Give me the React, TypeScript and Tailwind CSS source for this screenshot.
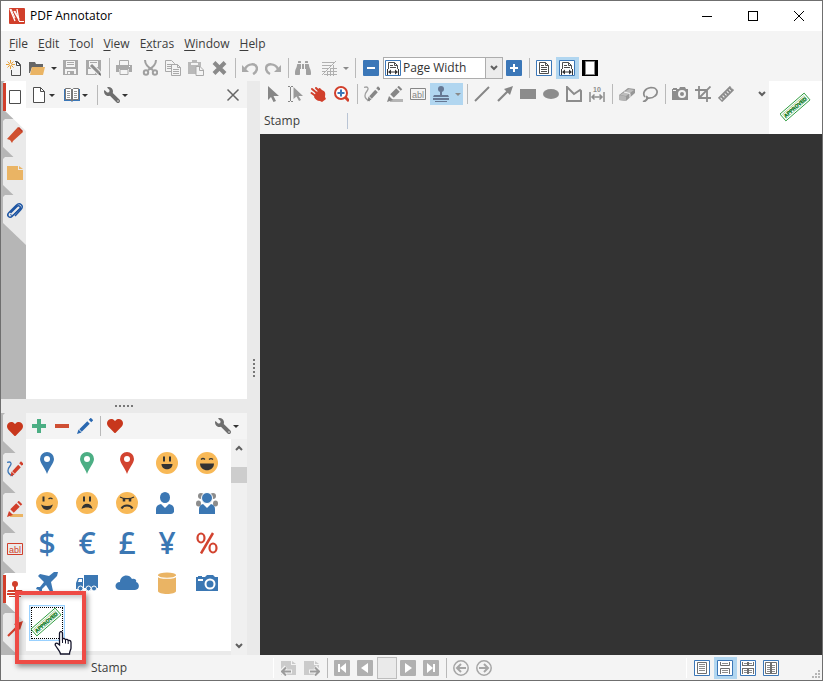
import React from 'react';
import clsx from 'clsx';
import { FaBinoculars, FaWrench, FaHeart } from 'react-icons/fa';

type SvgProps = { children: React.ReactNode; className?: string; box?: number };

const Svg: React.FC<SvgProps> = ({ children, className = 'size-4', box = 16 }) => (
  <svg
    viewBox={`0 0 ${box} ${box}`}
    className={clsx('shrink-0', className)}
    fill="none"
    stroke="none"
    aria-hidden="true"
  >
    {children}
  </svg>
);

/* ---------- main toolbar ---------- */

const NewIcon = () => (
  <Svg>
    <path d="M5.500 10v5.500h9v-11l-3-3H9" stroke="#4d4d4d" />
    <path d="M10.500 1.500v4h4z" fill="#fff" stroke="#4d4d4d" />
    <path d="M4.500 0v9M0 4.500h9M1.500 1.500l6 6M7.500 1.500l-6 6" stroke="#e8a33d" />
    <circle cx="4.500" cy="4.500" r="1.500" fill="#fff" stroke="#e8a33d" />
  </Svg>
);

const OpenIcon = () => (
  <Svg>
    <path d="M0 2h6l1 2h7v3H3l-2 6H0z" fill="#666" />
    <path d="M3 7h13l-2 8H1z" fill="#eab464" />
  </Svg>
);

const SaveIcon = () => (
  <Svg>
    <path d="M1 0h15v15H1z" fill="#a9a9a9" />
    <path d="M4 1h9v6H4zM3 9h11v5H3z" fill="#f4f4f4" />
    <path d="M5 2h7v1H5zM5 4h7v1H5zM5 11h7v3H5z" fill="#a9a9a9" />
    <path d="M6 12h2v2H6z" fill="#f4f4f4" />
  </Svg>
);

const SaveAsIcon = () => (
  <Svg>
    <path d="M1 0h15v15H1z" fill="#a9a9a9" />
    <path d="M4 1h9v6H4zM3 9h7v5H3z" fill="#f4f4f4" />
    <path d="M5 2h7v1H5z" fill="#a9a9a9" />
    <path d="M6 5l9 9" stroke="#f4f4f4" strokeWidth="5" />
    <path d="M6 5l8 8" stroke="#8f8f8f" strokeWidth="3" />
    <path d="M13 14l3 2-1-4z" fill="#666" />
  </Svg>
);

const PrintIcon = () => (
  <Svg>
    <path d="M3.500.500h9v5h-9z" fill="#f4f4f4" stroke="#a9a9a9" />
    <path d="M0 5h16v7h-3V9H3v3H0z" fill="#a9a9a9" />
    <path d="M4 9.500h8v5H4z" fill="#f4f4f4" stroke="#a9a9a9" />
    <path d="M13 6h1v1h-1z" fill="#fff" />
  </Svg>
);

const CutIcon = () => (
  <Svg>
    <path d="M3 0c0 4 2 7 8 10M14 0c0 4-2 7-8 10" stroke="#a0a0a0" strokeWidth="2" />
    <circle cx="4" cy="12.500" r="2.200" stroke="#a0a0a0" strokeWidth="2" />
    <circle cx="13" cy="12.500" r="2.200" stroke="#a0a0a0" strokeWidth="2" />
  </Svg>
);

const CopyIcon = () => (
  <Svg>
    <path d="M.5.5h6l3 3v8h-9z" stroke="#a9a9a9" />
    <path d="M2 4.500h5M2 6.500h4M2 8.500h4" stroke="#a9a9a9" />
    <path d="M6.500 4.500h6l3 3v8h-9z" fill="#f4f4f4" stroke="#a9a9a9" />
    <path d="M12.500 4.500v3h3M8 9.500h6M8 11.500h6M8 13.500h6" stroke="#a9a9a9" />
  </Svg>
);

const PasteIcon = () => (
  <Svg>
    <path d="M0 2h4V0h5v2h4v12H0z" fill="#b9b9b9" />
    <path d="M3 3h7v2H3z" fill="#f4f4f4" />
    <path d="M8 6.500h4l3.500 3.500v5.500H8z" fill="#f4f4f4" stroke="#a9a9a9" />
    <path d="M11.500 7v3.500H15" stroke="#a9a9a9" />
  </Svg>
);

const DeleteIcon = () => (
  <Svg>
    <path d="M3 2.500l11 11M14 2.500l-11 11" stroke="#8a8a8a" strokeWidth="4" />
  </Svg>
);

const UndoIcon = ({ flip = false }: { flip?: boolean }) => (
  <Svg className={clsx('size-4', flip && '-scale-x-100')}>
    <path d="M3 9c3-6 11-6 12-1 0 3-2 5-4 6" stroke="#a9a9a9" strokeWidth="2.500" />
    <path d="M0 5v7h7z" fill="#a9a9a9" />
  </Svg>
);

const NoGridIcon = () => (
  <Svg>
    <path
      d="M1 2.500h12M1 5.500h9M1 8.500h6M1 11.500h3M6 11.500h10M9 8.500h7M3 14.500h13M6.500 11v5M9.500 8v8M12.500 5v11"
      stroke="#b0b0b0"
    />
    <path d="M1 15L15 1" stroke="#b0b0b0" />
  </Svg>
);

const ZoomStep = ({ plus = false }: { plus?: boolean }) => (
  <Svg>
    <rect width="16" height="16" rx="1" fill="#3b77b8" />
    <path d={plus ? 'M4 8h8M8 4v8' : 'M4 8h8'} stroke="#fff" strokeWidth="2" />
  </Svg>
);

const PageFitIcon = ({ arrows = false }: { arrows?: boolean }) => (
  <Svg>
    <path d="M.5.500h15v15H.5z" fill="#fff" stroke="#3b77b8" />
    <path d="M3.500 2.500h6l3 3v8h-9z" stroke="#4d4d4d" />
    <path d="M9.500 2.500v3h3M5 5.500h3M5 7.500h6" stroke="#4d4d4d" />
    {arrows ? (
      <>
        <path d="M2 9h12v6H2z" fill="#fff" />
        <path d="M2.500 9v6M13.500 9v6M4 12h8" stroke="#333" />
        <path d="M3 12l3-2.500v5zM13 12l-3-2.500v5z" fill="#333" />
      </>
    ) : (
      <path d="M5 9.500h6M5 11.500h6" stroke="#4d4d4d" />
    )}
  </Svg>
);

const FullScreenIcon = () => (
  <Svg>
    <path d="M0 0h16v16H0z" fill="#000" />
    <path d="M3.500 1.500h9v13h-9z" fill="#fff" stroke="#888" />
  </Svg>
);

/* ---------- tool bar ---------- */

const Pointer = () => (
  <Svg>
    <path d="M4 0v14l3-3 2.500 5 2.500-1-2.500-5H15z" fill="#868686" />
  </Svg>
);

const TextPointer = () => (
  <Svg>
    <path d="M1 .5h2M4 .5h2M3.500 1v14M1 15.500h2M4 15.500h2" stroke="#868686" />
    <path d="M6.500 1v12l3-2.500L12 15l2-1-2.500-4H16z" fill="#9a9a9a" />
  </Svg>
);

const HandTool = () => (
  <Svg>
    <path
      d="M2 3L8 8M6 2l5 5M9.500 3L13 6.500M1.500 7L7 11"
      stroke="#d13f2b"
      strokeWidth="2"
      strokeLinecap="round"
    />
    <path d="M6 6l5-2 3 1c2 2 1 4 1 6l1 2-4 3-2-1c-3 0-5-2-6-4z" fill="#d13f2b" />
  </Svg>
);

const ZoomTool = () => (
  <Svg>
    <path d="M12 11l4 4" stroke="#d13f2b" strokeWidth="3" />
    <circle cx="8" cy="7" r="6" fill="#fff" stroke="#d13f2b" strokeWidth="2" />
    <path d="M4.500 7h7M8 3.500v7" stroke="#3b77b8" strokeWidth="2" />
  </Svg>
);

const PenTool = ({ pen = '#868686', ink = '#a0a0a0' }: { pen?: string; ink?: string }) => (
  <Svg>
    <path d="M0 1.500c4-1.500 5 1 3 3.500s-3 5-1 7.500 3 2 4 2" stroke={ink} strokeWidth="1.300" />
    <path d="M6.500 11.500l6-6.500" stroke={pen} strokeWidth="3.500" />
    <path d="M13.500 3.500L15.300 1.500" stroke={pen} strokeWidth="3.500" />
    <path d="M4.500 10.500l3 3-4 2z" fill={pen} />
  </Svg>
);

const MarkerTool = ({ pen = '#868686', ink = '#b5b5b5' }: { pen?: string; ink?: string }) => (
  <Svg>
    <path d="M3 14.500h13" stroke={ink} strokeWidth="3" />
    <path d="M5 10l6-6" stroke={pen} strokeWidth="5" />
    <path d="M12 3l1.500-1.500" stroke={pen} strokeWidth="5" />
    <path d="M2 10l4 4-6 2z" fill={pen} />
  </Svg>
);

const TextTool = ({ color = '#868686' }: { color?: string }) => (
  <Svg>
    <path d="M.5 2.500h15v11H.5z" stroke={color} />
    <text x="2" y="12" fontSize="9" fontFamily="'Liberation Sans', sans-serif" fill={color}>
      abl
    </text>
  </Svg>
);

const StampTool = ({ color = '#667894' }: { color?: string }) => (
  <Svg>
    <circle cx="8" cy="3" r="3" fill={color} />
    <path d="M7 5h2v4h6l1 2H0l1-2h6z" fill={color} />
    <path d="M0 12h16v2H0zM2 15h12v1H2z" fill={color} />
  </Svg>
);

const LineTool = () => (
  <Svg>
    <path d="M1 15L15 1" stroke="#868686" strokeWidth="2" />
  </Svg>
);

const ArrowTool = ({ color = '#868686' }: { color?: string }) => (
  <Svg>
    <path d="M1 15L11 5" stroke={color} strokeWidth="2.200" />
    <path d="M16 0l-3 9-6-6z" fill={color} />
  </Svg>
);

const RectTool = () => (
  <Svg>
    <path d="M0 3h16v10H0z" fill="#8c8c8c" />
  </Svg>
);

const EllipseTool = () => (
  <Svg>
    <ellipse cx="8" cy="8" rx="8" ry="5" fill="#8c8c8c" />
  </Svg>
);

const PolygonTool = () => (
  <Svg>
    <path d="M1 15V1l7 7 6-4 1 1v10z" stroke="#8c8c8c" strokeWidth="2" />
  </Svg>
);

const MeasureTool = () => (
  <Svg>
    <text x="4" y="6" fontSize="7" fontWeight="700" fontFamily="'Liberation Sans', sans-serif" fill="#8c8c8c">
      10
    </text>
    <path
      d="M1 6v10M15 6v10M3 11h10M5.500 8.500L3 11l2.500 2.500M10.500 8.500L13 11l-2.500 2.500"
      stroke="#8c8c8c"
      strokeWidth="1.500"
    />
  </Svg>
);

const EraserTool = () => (
  <Svg>
    <path d="M0 9l9-7 7 1v4l-9 8-7-1z" fill="#979797" />
    <path d="M1 9l9-6 5 1-8 6z" fill="#bdbdbd" />
    <path d="M0 9l7 1.500V15l-7-1z" fill="#b5b5b5" />
    <path d="M5 6l6 1.500v4" stroke="#f4f4f4" />
  </Svg>
);

const LassoTool = () => (
  <Svg>
    <path d="M3 11C0 7 3 2 9 1.500c6 0 8 5 4 8.500-3 3-6 2-9 2" stroke="#8c8c8c" strokeWidth="1.700" />
    <path d="M4 10.500c3 1 1 4-3 5.500" stroke="#8c8c8c" strokeWidth="2" />
  </Svg>
);

const SnapshotTool = () => (
  <Svg>
    <path d="M0 3h1V2h4v1h2l1-2h5l1 2h2v11H0z" fill="#8c8c8c" />
    <circle cx="10" cy="8" r="3" fill="#8c8c8c" stroke="#f4f4f4" strokeWidth="2" />
    <path d="M1 4h3v1H1z" fill="#f4f4f4" />
  </Svg>
);

const CropTool = () => (
  <Svg>
    <path d="M4 0v12h12M0 4h12v12M15.500.500L4 12" stroke="#8c8c8c" strokeWidth="1.800" />
  </Svg>
);

const RulerTool = () => (
  <Svg>
    <path d="M2 14L14 2" stroke="#8c8c8c" strokeWidth="6" />
    <path d="M3 13L14 2" stroke="#f4f4f4" strokeWidth="2.500" strokeDasharray="1 2" />
  </Svg>
);

/* ---------- side panels ---------- */

const PageThumb = () => (
  <Svg>
    <path d="M2.500 1.500h11v13h-11z" fill="#fff" stroke="#4d4d4d" />
  </Svg>
);

const PageIcon = () => (
  <Svg>
    <path d="M2.500.500h7l4 4v11h-11z" fill="#fff" stroke="#4d4d4d" />
    <path d="M9.500.500v4h4" stroke="#4d4d4d" />
  </Svg>
);

const BookIcon = () => (
  <Svg>
    <path d="M0 2h16v12H9l-1 1-1-1H0z" fill="#3b77b8" />
    <path d="M1.500 1.500h5L8 3l1.500-1.500h5v11h-5L8 14l-1.500-1.500h-5z" fill="#fff" stroke="#777" />
    <path d="M8 3v11" stroke="#777" strokeWidth="2" />
    <path
      d="M3 4.500h3M3 6.500h3M3 8.500h3M3 10.500h3M10 4.500h3M10 6.500h3M10 8.500h3M10 10.500h3"
      stroke="#999"
    />
  </Svg>
);

const BookmarkIcon = () => (
  <Svg>
    <path d="M11 0l5 5L6 14l-1 2-2-3-3-1z" fill="#d0502f" />
    <path d="M11.500.500l4 4" stroke="#b93525" strokeWidth="1.500" />
  </Svg>
);

const NoteIcon = () => (
  <Svg>
    <path d="M0 1h11v4h5v10H0z" fill="#eab464" />
    <path d="M12 1l4 3h-4z" fill="#eab464" />
  </Svg>
);

const ClipIcon = () => (
  <Svg>
    <path
      d="M3.500 10L10 3.500c2-2 4.500.500 2.500 2.500l-7 7C2.500 16-1 12.500 2 9.500l7-7c4-4 8.500.500 5 4L8 13"
      stroke="#1f56a3"
      strokeWidth="1.500"
    />
    <path d="M4 11c-1 2 1 2 2 1l6-6" stroke="#1f56a3" />
  </Svg>
);

const AddIcon = () => (
  <Svg>
    <path d="M1 8h14M8 1v14" stroke="#4cae84" strokeWidth="4" />
  </Svg>
);

const RemoveIcon = () => (
  <Svg>
    <path d="M1 8h14" stroke="#cf4f34" strokeWidth="4" />
  </Svg>
);

const PencilIcon = () => (
  <Svg>
    <path d="M3.500 12.500l8-8M13 3l2-2" stroke="#2a68b0" strokeWidth="3.500" />
    <path d="M1.500 11.500l3 3L0 16z" fill="#2a68b0" />
  </Svg>
);

/* ---------- stamps ---------- */

const Pin = ({ color }: { color: string }) => (
  <Svg className="size-[22px]" box={22}>
    <path d="M11 0a7 7 0 0 1 7 7c0 4-5 9-7 15C9 16 4 11 4 7a7 7 0 0 1 7-7z" fill={color} />
    <circle cx="11" cy="7" r="3" fill="#fff" />
  </Svg>
);

const faces: Record<string, React.ReactNode> = {
  smile: (
    <>
      <path d="M8 4.500v5M14 4.500v5" stroke="#333" strokeWidth="2" />
      <path d="M5.500 12h11c0 7-11 7-11 0z" fill="#333" />
    </>
  ),
  laugh: (
    <>
      <path d="M5 7.500q2-2 4 0M13 7.500q2-2 4 0" stroke="#333" strokeWidth="1.200" />
      <path d="M4 11.500h14c0 9-14 9-14 0z" fill="#333" />
    </>
  ),
  wink: (
    <>
      <path d="M7.500 4.500v5" stroke="#333" strokeWidth="2" />
      <path d="M12.500 7q2-2 4 0" stroke="#333" strokeWidth="1.200" />
      <path d="M5 12.500q6 3 12 0-2 5.500-6 5.500t-6-5.500z" fill="#333" />
    </>
  ),
  sad: (
    <>
      <path d="M8 4.500v5M14 4.500v5" stroke="#333" strokeWidth="2" />
      <path d="M5.500 17c1-7 10-7 11 0-3-2-8-2-11 0z" fill="#333" />
    </>
  ),
  angry: (
    <>
      <path d="M4 5q4 2 7 1.500Q14 7 18 5" stroke="#333" strokeWidth="1.200" />
      <path d="M8 6v3.500M14 6v3.500" stroke="#333" strokeWidth="2.500" />
      <path d="M5.500 16.500c2-4 9-4 11 0" stroke="#333" strokeWidth="2" />
    </>
  ),
};

const Face = ({ mood }: { mood: string }) => (
  <Svg className="size-[22px]" box={22}>
    <circle cx="11" cy="11" r="11" fill="#f8b957" />
    {faces[mood]}
  </Svg>
);

const Person = () => (
  <Svg className="size-[22px]" box={22}>
    <ellipse cx="9" cy="5.500" rx="5" ry="5.500" fill="#3b77b3" />
    <path d="M0 22v-5q0-4 5-5l4 4 4-4q5 1 5 5v3q-1 2-3 2z" fill="#3b77b3" />
  </Svg>
);

const People = () => (
  <Svg className="size-[22px]" box={22}>
    <circle cx="5" cy="4" r="3" fill="#8c8c8c" />
    <circle cx="17" cy="4" r="3" fill="#8c8c8c" />
    <ellipse cx="2.500" cy="11.500" rx="2.500" ry="3" fill="#8c8c8c" />
    <ellipse cx="19.500" cy="11.500" rx="2.500" ry="3" fill="#8c8c8c" />
    <circle cx="11" cy="6" r="5.500" fill="#3b77b3" stroke="#fff" />
    <path d="M3 22v-5q0-4 4-5l4 4 4-4q4 1 4 5v5z" fill="#3b77b3" />
  </Svg>
);

const Currency = ({ sign }: { sign: string }) => (
  <span className="text-[30px] leading-none font-semibold text-[#3b77b3]">{sign}</span>
);

const Percent = () => (
  <Svg className="size-[22px]" box={22}>
    <ellipse cx="5" cy="6" rx="3.500" ry="4.500" stroke="#d2432f" strokeWidth="2.200" />
    <ellipse cx="17" cy="16" rx="3.500" ry="4.500" stroke="#d2432f" strokeWidth="2.200" />
    <path d="M17 1L5 21.500" stroke="#d2432f" strokeWidth="2.500" />
  </Svg>
);

const Plane = () => (
  <Svg className="size-[22px]" box={22}>
    <path
      d="M22 0l-1 4-6 6 2 9-2 2-5-8-4 4v3l-2 1-1-3-3-1 1-2h3l4-5L2 4l2-2 9 2 5-4z"
      fill="#3b77b3"
    />
  </Svg>
);

const Truck = () => (
  <Svg className="size-[22px]" box={22}>
    <path d="M8 3h14v13H8zM0 11l2-5h5v11H0z" fill="#3b77b3" />
    <path d="M2 10l1-3h3v3z" fill="#fff" />
    <circle cx="4.500" cy="16.500" r="2.500" fill="#3b77b3" stroke="#fff" />
    <circle cx="12.500" cy="16.500" r="2.500" fill="#3b77b3" stroke="#fff" />
    <circle cx="18" cy="16.500" r="2.500" fill="#3b77b3" stroke="#fff" />
  </Svg>
);

const Cloud = () => (
  <Svg className="size-6" box={24}>
    <path d="M5 19c-6 0-6-8 0-8 0-7 9-9 12-3 3-1 5 1 4 3 4 1 4 8-1 8z" fill="#3b77b3" />
  </Svg>
);

const Cylinder = () => (
  <Svg className="size-[22px]" box={22}>
    <path d="M2 3v16c0 4 18 4 18 0V3z" fill="#eab464" />
    <ellipse cx="11" cy="3" rx="9" ry="2.500" fill="#eab464" />
    <path d="M2 4c1 3 17 3 18 0" stroke="#fff" strokeWidth="1.200" />
  </Svg>
);

const Camera = () => (
  <Svg className="size-[22px]" box={22}>
    <path d="M0 5h2V4h4v1h3l2-2h6l2 2h3v14H0z" fill="#3b77b3" />
    <circle cx="14" cy="12" r="4.500" stroke="#fff" strokeWidth="2" />
    <path d="M2 7h5v2H2z" fill="#fff" />
  </Svg>
);

const Approved = () => (
  <svg viewBox="0 0 32 32" className="size-8 shrink-0" role="img" aria-label="Approved">
    <g transform="rotate(-41 15 15)" fill="none" stroke="#2a9a3a">
      <path d="M-1 10.500h32v9H-1z" strokeWidth="0.900" />
      <path d="M1 12.300h28v5.400H1z" strokeWidth="0.400" />
      <text
        x="15"
        y="17"
        textAnchor="middle"
        fontSize="5"
        fontWeight="700"
        fontFamily="'Liberation Sans', sans-serif"
        fill="#087818"
        stroke="#087818"
        strokeWidth="0.300"
      >
        APPROVED
      </text>
    </g>
  </svg>
);

/* ---------- status bar ---------- */

const PageJump = ({ forward = false }: { forward?: boolean }) => (
  <Svg>
    <path d="M0 1h10v4h5v10H0z" fill="#cbcbcb" />
    <path d="M11 1l4 3h-4z" fill="#cbcbcb" />
    <path
      d={forward ? 'M5 11.500h11M11 7l4.500 4.500L11 16' : 'M11 11.500H0M5 7L.5 11.500 5 16'}
      stroke="#f4f4f4"
      strokeWidth="4"
    />
    <path
      d={forward ? 'M6 11.500h9M11 7.500l4 4-4 4' : 'M10 11.500H1M5 7.500l-4 4 4 4'}
      stroke="#9c9c9c"
      strokeWidth="2"
    />
  </Svg>
);

const NavIcon = ({ d, bar }: { d: string; bar?: string }) => (
  <Svg>
    <rect width="16" height="16" rx="1" fill="#b0b0b0" />
    <path d={d} fill="#fff" />
    {bar && <path d={bar} stroke="#fff" strokeWidth="2" />}
  </Svg>
);

const RoundArrow = ({ forward = false }: { forward?: boolean }) => (
  <Svg className={clsx('size-4', forward && '-scale-x-100')}>
    <circle cx="8" cy="8" r="7.200" stroke="#a6a6a6" strokeWidth="1.500" />
    <path d="M13 8H4M8 4L4 8l4 4" stroke="#a6a6a6" strokeWidth="2" />
  </Svg>
);

const viewFrames: Record<string, string> = {
  single: 'M3.500 2.500h9v11h-9z',
  continuous: 'M3.500 2v3.500h9V2M3.500 14V8.500h9V14',
  facing: 'M2 5.500h12M2 8.500h12M7.500 2v4M8.500 2v4M7.500 8v6M8.500 8v6M2.500 2v4M13.500 2v4M2.500 8v6M13.500 8v6',
  book: 'M2.500 2.500h11v11h-11zM7.500 2v12M8.500 2v12',
};

const viewLines: Record<string, string> = {
  single: 'M5 4.500h6M5 6.500h6M5 8.500h6M5 10.500h6',
  continuous: 'M5 3.500h6M5 10.500h6M5 12.500h6',
  facing: 'M4 3.500h3M9 3.500h3M4 10.500h3M9 10.500h3M4 12.500h3M9 12.500h3',
  book: 'M4 5.500h3M9 5.500h3M4 7.500h3M9 7.500h3M4 9.500h3M9 9.500h3M4 11.500h3M9 11.500h3',
};

const ViewIcon = ({ kind }: { kind: string }) => (
  <Svg>
    <path d="M.5.500h15v15H.5z" fill="#fff" stroke="#3b77b8" />
    <path d={viewFrames[kind]} stroke="#6e6e6e" />
    <path d={viewLines[kind]} stroke="#8c8c8c" />
  </Svg>
);

/* ---------- shared controls ---------- */

const Tool: React.FC<{ label: string; active?: boolean; className?: string; children: React.ReactNode }> = ({
  label,
  active,
  className,
  children,
}) => (
  <button
    type="button"
    aria-label={label}
    className={clsx('flex h-[22px] w-[23px] shrink-0 items-center pl-[3px]', active && 'bg-[#b1d6f0]', className)}
  >
    {children}
  </button>
);

const Drop: React.FC<{ label: string; className?: string }> = ({ label, className = 'text-[#333]' }) => (
  <button
    type="button"
    aria-label={label}
    className={clsx('flex h-[22px] w-[10px] shrink-0 items-center justify-center', className)}
  >
    <svg viewBox="0 0 6 3" className="h-[3px] w-[6px]" fill="currentColor">
      <path d="M0 0h6L3 3z" />
    </svg>
  </button>
);

const Sep: React.FC<{ className?: string }> = ({ className = 'w-2' }) => (
  <div className={clsx('flex h-5 shrink-0 justify-center', className)}>
    <div className="w-px bg-[#b9b9b9]" />
  </div>
);

const Chevron: React.FC<{ up?: boolean }> = ({ up }) => (
  <svg viewBox="0 0 8 6" className={clsx('h-[6px] w-2', up && 'rotate-180')} fill="none">
    <path d="M1 1l3 3 3-3" stroke="#606060" strokeWidth="2" />
  </svg>
);

const SideTab: React.FC<{ label: string; active?: boolean; pitch: string; children: React.ReactNode }> = ({
  label,
  active,
  pitch,
  children,
}) => (
  <div className={clsx('relative w-full shrink-0', pitch, active && 'z-10')}>
    <button type="button" aria-label={label} className="absolute top-0 right-0 left-[2px] h-[50px]">
      <span
        className={clsx(
          'block h-full w-full [clip-path:polygon(0_2px,2px_0,100%_0,100%_100%,0_28px)]',
          active ? 'bg-white' : 'bg-[#eaeaea]',
        )}
      />
      {active && <span className="absolute top-[2px] left-0 h-7 w-[3px] bg-[#d13f2b]" />}
      <span className="absolute top-2 right-[3px]">{children}</span>
    </button>
  </div>
);

const menus = ['File', 'Edit', 'Tool', 'View', 'Extras', 'Window', 'Help'];
const accessKey: Record<string, number> = { Extras: 1 };

const stamps: { name: string; icon: React.ReactNode }[] = [
  { name: 'Blue pin', icon: <Pin color="#3b77b3" /> },
  { name: 'Green pin', icon: <Pin color="#4cae84" /> },
  { name: 'Red pin', icon: <Pin color="#d2432f" /> },
  { name: 'Smile', icon: <Face mood="smile" /> },
  { name: 'Laugh', icon: <Face mood="laugh" /> },
  { name: 'Wink', icon: <Face mood="wink" /> },
  { name: 'Sad', icon: <Face mood="sad" /> },
  { name: 'Angry', icon: <Face mood="angry" /> },
  { name: 'Person', icon: <Person /> },
  { name: 'People', icon: <People /> },
  { name: 'Dollar', icon: <Currency sign="$" /> },
  { name: 'Euro', icon: <Currency sign="€" /> },
  { name: 'Pound', icon: <Currency sign="£" /> },
  { name: 'Yen', icon: <Currency sign="¥" /> },
  { name: 'Percent', icon: <Percent /> },
  { name: 'Plane', icon: <Plane /> },
  { name: 'Truck', icon: <Truck /> },
  { name: 'Cloud', icon: <Cloud /> },
  { name: 'Database', icon: <Cylinder /> },
  { name: 'Camera', icon: <Camera /> },
];

const TitleBar = () => (
  <header className="flex h-[30px] shrink-0 items-center bg-white pl-2">
    <svg viewBox="0 0 16 16" className="size-4 shrink-0" fill="none">
      <rect width="16" height="16" rx="1" fill="#d13f2b" />
      <path d="M1 1l5 12M5 3l5 9M8 1l2 12" stroke="#fff" strokeWidth="1.300" />
      <path d="M2 1l4 9M6 3l4 8" stroke="#fff" />
      <path d="M10 13.500h5" stroke="#fff" />
    </svg>
    <h1 className="ml-[5px] text-[12px] leading-4 text-black">PDF Annotator</h1>
    <div className="ml-auto flex h-full">
      <button type="button" aria-label="Minimize" className="flex w-[46px] items-center justify-center">
        <span className="h-px w-[10px] bg-black" />
      </button>
      <button type="button" aria-label="Maximize" className="flex w-[46px] items-center justify-center">
        <span className="size-[10px] border border-black" />
      </button>
      <button type="button" aria-label="Close" className="flex w-[46px] items-center justify-center">
        <svg viewBox="0 0 10 10" className="size-[10px]" stroke="#000">
          <path d="M0 0l10 10M10 0L0 10" />
        </svg>
      </button>
    </div>
  </header>
);

const MenuBar = () => (
  <nav className="flex h-[25px] shrink-0 items-center gap-[10px] pl-2">
    {menus.map((menu) => {
      const key = accessKey[menu] ?? 0;
      return (
        <button key={menu} type="button" className="text-[12px] leading-4">
          {menu.slice(0, key)}
          <span className="underline underline-offset-2">{menu[key]}</span>
          {menu.slice(key + 1)}
        </button>
      );
    })}
  </nav>
);

const MainToolbar = () => (
  <div className="flex h-[25px] shrink-0 items-center pb-px pl-[2px]">
    <Tool label="New"><NewIcon /></Tool>
    <Tool label="Open"><OpenIcon /></Tool>
    <Drop label="Recent files" />
    <Tool label="Save"><SaveIcon /></Tool>
    <Tool label="Save as"><SaveAsIcon /></Tool>
    <Sep />
    <Tool label="Print"><PrintIcon /></Tool>
    <Tool label="Cut" className="ml-[3px]"><CutIcon /></Tool>
    <Tool label="Copy"><CopyIcon /></Tool>
    <Tool label="Paste"><PasteIcon /></Tool>
    <Tool label="Delete"><DeleteIcon /></Tool>
    <Sep />
    <Tool label="Undo"><UndoIcon /></Tool>
    <Tool label="Redo"><UndoIcon flip /></Tool>
    <Sep className="w-[7px]" />
    <Tool label="Find"><FaBinoculars size={16} color="#a0a0a0" /></Tool>
    <Tool label="Grid" className="ml-[3px]"><NoGridIcon /></Tool>
    <Drop label="Grid options" className="text-[#8a8a8a]" />
    <Sep className="w-[9px]" />
    <Tool label="Zoom out"><ZoomStep /></Tool>
    <div className="relative h-[22px] w-[120px] shrink-0">
      <select
        aria-label="Zoom"
        className="block h-[22px] w-full appearance-none border border-[#adadad] bg-white py-0 pl-[19px] text-[12px] leading-5 text-[#333]"
      >
        <option>Page Width</option>
        <option>Full Page</option>
      </select>
      <span className="pointer-events-none absolute top-[3px] left-[2px]"><PageFitIcon arrows /></span>
      <span className="pointer-events-none absolute top-0 right-0 flex h-full w-[18px] items-center justify-center border border-[#adadad] bg-[#ececec]">
        <Chevron />
      </span>
    </div>
    <Tool label="Zoom in"><ZoomStep plus /></Tool>
    <Sep className="w-[7px]" />
    <Tool label="Fit page"><PageFitIcon /></Tool>
    <Tool label="Fit width" active><PageFitIcon arrows /></Tool>
    <Tool label="Full screen"><FullScreenIcon /></Tool>
  </div>
);

const PagesPanel = () => (
  <section className="flex min-h-0 flex-1">
    <div className="flex w-[25px] shrink-0 flex-col bg-[#b6b6b6]">
      <SideTab label="Pages" pitch="h-[38px]" active><PageThumb /></SideTab>
      <SideTab label="Bookmarks" pitch="h-[38px]"><BookmarkIcon /></SideTab>
      <SideTab label="Annotations" pitch="h-[38px]"><NoteIcon /></SideTab>
      <SideTab label="Attachments" pitch="h-[38px]"><ClipIcon /></SideTab>
    </div>
    <div className="flex min-w-0 flex-1 flex-col bg-white">
      <div className="flex h-[27px] shrink-0 items-center bg-[#f4f4f4] pt-px pr-[2px] pl-[2px]">
        <Tool label="Page"><PageIcon /></Tool>
        <Drop label="Page options" className="mr-1 -ml-1 text-[#333]" />
        <Tool label="Layout"><BookIcon /></Tool>
        <Drop label="Layout options" className="-ml-1 text-[#333]" />
        <Sep className="w-[14px]" />
        <Tool label="Settings" className="-ml-[3px]"><FaWrench size={16} color="#6e6e6e" className="-scale-x-100" /></Tool>
        <Drop label="Settings menu" className="-ml-1 text-[#333]" />
        <Tool label="Close panel" className="ml-auto">
          <Svg>
            <path d="M2.500 2.500l11 11M13.500 2.500l-11 11" stroke="#666" strokeWidth="1.500" />
          </Svg>
        </Tool>
      </div>
    </div>
  </section>
);

const StampsPanel = () => (
  <section className="flex h-[242px] shrink-0">
    <div className="flex w-[25px] shrink-0 flex-col overflow-hidden bg-[#b6b6b6]">
      <SideTab label="Favorites" pitch="h-10"><FaHeart size={16} color="#c8371c" /></SideTab>
      <SideTab label="Pens" pitch="h-10"><PenTool pen="#d13f2b" ink="#3b77b8" /></SideTab>
      <SideTab label="Markers" pitch="h-10"><MarkerTool pen="#d13f2b" ink="#eab464" /></SideTab>
      <SideTab label="Text" pitch="h-10"><TextTool color="#d13f2b" /></SideTab>
      <SideTab label="Stamps" pitch="h-10" active><StampTool color="#d13f2b" /></SideTab>
      <SideTab label="Arrows" pitch="h-10"><ArrowTool color="#d13f2b" /></SideTab>
    </div>
    <div className="flex min-w-0 flex-1 flex-col">
      <div className="flex h-[26px] shrink-0 items-center bg-[#f4f4f4] pl-[2px]">
        <Tool label="Add"><AddIcon /></Tool>
        <Tool label="Remove"><RemoveIcon /></Tool>
        <Tool label="Edit stamp"><PencilIcon /></Tool>
        <Sep className="w-[7px]" />
        <Tool label="Add to favorites"><FaHeart size={16} color="#c8371c" /></Tool>
        <Tool label="Stamp settings" className="ml-auto"><FaWrench size={16} color="#6e6e6e" className="-scale-x-100" /></Tool>
        <Drop label="Stamp settings menu" className="mr-[6px] -ml-1 text-[#333]" />
      </div>
      <div className="flex min-h-0 flex-1">
        <div className="mb-1 grid flex-1 auto-rows-[40px] grid-cols-[repeat(5,40px)] content-start bg-white pt-1 pl-px">
          {stamps.map((stamp) => (
            <button key={stamp.name} type="button" aria-label={stamp.name} className="flex items-center justify-center">
              {stamp.icon}
            </button>
          ))}
          <div className="relative z-20 flex items-center justify-center">
            <button
              type="button"
              aria-label="Approved"
              className="flex size-9 items-center justify-center border border-[#99d1ff] bg-[#e5f3ff] p-px"
            >
              <span className="flex size-full items-center justify-center border border-dotted border-black bg-white">
                <Approved />
              </span>
            </button>
            <div className="pointer-events-none absolute -top-3 -left-3 h-[73px] w-[71px] border-4 border-[#ee4b45] shadow-[2px_3px_5px_rgba(0,0,0,0.4),inset_2px_3px_4px_rgba(0,0,0,0.2)]" />
            <svg viewBox="0 0 18 24" className="pointer-events-none absolute top-7 left-[27px] h-6 w-[18px]">
              <path
                d="M5.500 14V2.500c0-2.500 3-2.500 3 0V8c1-1 2.500-.5 3 .7 1-.7 2.200-.2 2.700.8 1.300-.6 2.800.2 2.800 2V17c0 2-1.500 3-1.500 6h-9c0-2-3-5-5-8.500-1-2 1-3 2.500-1.700z"
                fill="#fff"
                stroke="#14142a"
                strokeWidth="1.300"
              />
              <path d="M8.500 8v4M11.500 9v3.500M14.200 9.500V13" stroke="#14142a" />
            </svg>
          </div>
        </div>
        <div className="flex w-4 shrink-0 flex-col items-center bg-[#f0f0f0]">
          <button type="button" aria-label="Scroll up" className="flex h-[18px] w-full items-center justify-center">
            <Chevron up />
          </button>
          <div className="mt-[10px] h-4 w-full bg-[#cdcdcd]" />
          <button type="button" aria-label="Scroll down" className="mt-auto flex h-[18px] w-full items-center justify-center">
            <Chevron />
          </button>
        </div>
      </div>
    </div>
  </section>
);

const Grip: React.FC<{ vertical?: boolean }> = ({ vertical }) => (
  <div className={clsx('flex gap-[2px]', vertical && 'flex-col')}>
    {[0, 1, 2, 3, 4].map((dot) => (
      <span key={dot} className="size-[2px] bg-[#777]" />
    ))}
  </div>
);

const ToolArea = () => (
  <div className="flex shrink-0">
    <div className="min-w-0 flex-1">
      <div className="flex h-[26px] items-center pl-px">
        <Tool label="Select"><Pointer /></Tool>
        <Tool label="Select text"><TextPointer /></Tool>
        <Tool label="Pan"><HandTool /></Tool>
        <Tool label="Zoom tool"><ZoomTool /></Tool>
        <Sep />
        <Tool label="Pen"><PenTool /></Tool>
        <Tool label="Marker"><MarkerTool /></Tool>
        <Tool label="Text box"><TextTool /></Tool>
        <Tool label="Stamp tool" active><StampTool /></Tool>
        <Drop label="Stamp list" className="bg-[#b1d6f0] text-[#8a8a8a]" />
        <Sep />
        <Tool label="Line"><LineTool /></Tool>
        <Tool label="Arrow"><ArrowTool /></Tool>
        <Tool label="Rectangle"><RectTool /></Tool>
        <Tool label="Ellipse"><EllipseTool /></Tool>
        <Tool label="Polygon"><PolygonTool /></Tool>
        <Tool label="Measure"><MeasureTool /></Tool>
        <Sep className="w-[7px]" />
        <Tool label="Eraser"><EraserTool /></Tool>
        <Tool label="Lasso"><LassoTool /></Tool>
        <Sep className="w-[7px]" />
        <Tool label="Snapshot"><SnapshotTool /></Tool>
        <Tool label="Crop"><CropTool /></Tool>
        <Tool label="Ruler"><RulerTool /></Tool>
        <button type="button" aria-label="More tools" className="mr-[3px] ml-auto">
          <Chevron />
        </button>
      </div>
      <div className="flex h-[27px] items-center pl-1">
        <span className="w-[83px] text-[12px] leading-4">Stamp</span>
        <span className="h-4 w-px bg-[#b9c4d4]" />
      </div>
    </div>
    <div className="flex h-[53px] w-[53px] shrink-0 items-center justify-center bg-white">
      <Approved />
    </div>
  </div>
);

const StatusBar = () => (
  <footer className="flex h-[25px] shrink-0 items-center">
    <span className="w-[272px] shrink-0 pl-[90px] text-[12px] leading-4">Stamp</span>
    <div className="h-5 w-px bg-white" />
    <div className="flex items-center pl-1">
      <Tool label="Page back"><PageJump /></Tool>
      <Tool label="Page forward"><PageJump forward /></Tool>
      <Sep className="w-[7px]" />
      <Tool label="First page"><NavIcon d="M12 3v10L6 8z" bar="M5 4v8" /></Tool>
      <Tool label="Previous page"><NavIcon d="M11 3v10L4 8z" /></Tool>
      <input aria-label="Page number" disabled className="h-[22px] w-5 border border-[#bdbdbd] bg-[#eaeaea]" />
      <Tool label="Next page"><NavIcon d="M5 3v10l7-5z" /></Tool>
      <Tool label="Last page"><NavIcon d="M4 3v10l6-5z" bar="M11 4v8" /></Tool>
      <Sep className="w-[7px]" />
      <Tool label="Back"><RoundArrow /></Tool>
      <Tool label="Forward"><RoundArrow forward /></Tool>
    </div>
    <div className="ml-auto h-5 w-px bg-white" />
    <div className="flex pr-[29px] pl-1">
      <Tool label="Single page"><ViewIcon kind="single" /></Tool>
      <Tool label="Continuous" active><ViewIcon kind="continuous" /></Tool>
      <Tool label="Facing continuous"><ViewIcon kind="facing" /></Tool>
      <Tool label="Facing"><ViewIcon kind="book" /></Tool>
    </div>
    <svg viewBox="0 0 8 8" className="mr-[2px] mb-[2px] size-2 shrink-0 self-end" fill="#b5b5b5">
      <path d="M6 0h2v2H6zM3 3h2v2H3zM6 3h2v2H6zM0 6h2v2H0zM3 6h2v2H3zM6 6h2v2H6z" />
    </svg>
  </footer>
);

const App: React.FC = () => {
  return (
    <div className="flex h-screen w-full flex-col overflow-hidden border border-[#6f6f6f] bg-[#f4f4f4] font-['Open_Sans','Noto_Sans',sans-serif] text-[#3c3c3c]">
      <TitleBar />
      <MenuBar />
      <MainToolbar />
      <main className="flex min-h-0 flex-1">
        <aside className="flex w-[246px] shrink-0 flex-col bg-[#eaeaea]">
          <PagesPanel />
          <div className="flex h-[14px] shrink-0 items-center justify-center">
            <Grip />
          </div>
          <StampsPanel />
        </aside>
        <div className="flex w-[13px] shrink-0 items-center justify-center bg-[#eaeaea]">
          <Grip vertical />
        </div>
        <div className="flex min-w-0 flex-1 flex-col">
          <ToolArea />
          <div className="flex-1 bg-[#333333]" />
        </div>
      </main>
      <StatusBar />
    </div>
  );
};

export default App;
